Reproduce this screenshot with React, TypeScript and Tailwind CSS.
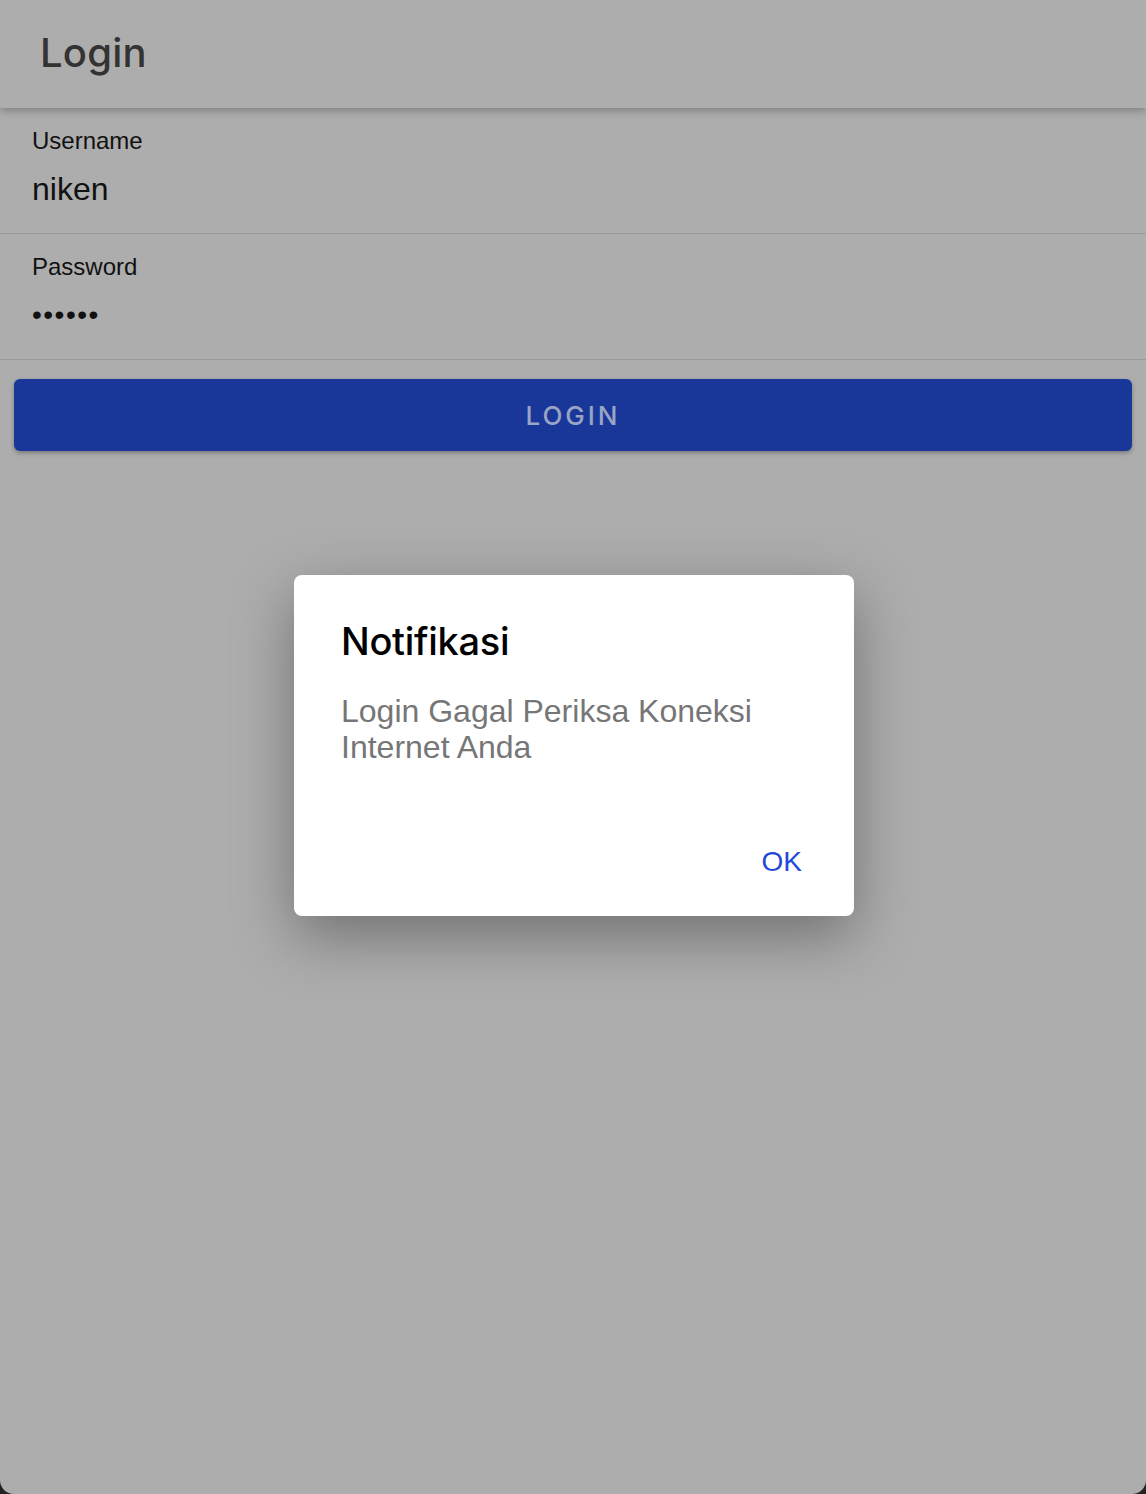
import React from "react";

// ─── Login screen with alert overlay ──────────────────────────────────────────

function Field({ label, value, secret }: { label: string; value: string; secret?: boolean }) {
  return (
    <div className="pl-8 border-b border-[#999999] h-[126px] flex flex-col">
      <span className="mt-[19px] text-[24px] leading-[28px] text-[#111111]">{label}</span>
      {secret ? (
        <span className="mt-[18px] text-[28px] leading-[32px] tracking-[1.5px] text-[#111111]">
          {value}
        </span>
      ) : (
        <span className="mt-[16px] text-[32px] leading-[36px] text-[#111111]">{value}</span>
      )}
    </div>
  );
}

export default function App() {
  return (
    <div className="w-[1146px] h-[1494px] bg-[#222222] relative overflow-hidden font-['Liberation_Sans',Arial,sans-serif]">
      <div className="h-full bg-[#adadad] rounded-b-[14px] flex flex-col">
        {/* Header */}
        <div className="h-[108px] shrink-0 flex items-center pl-10 shadow-[0_3px_8px_rgba(0,0,0,0.25)] relative z-10">
          <h1 className="text-[40px] leading-none text-[#333333] font-['Inter',sans-serif] font-medium tracking-[0.2px] pb-[2px]">
            Login
          </h1>
        </div>

        {/* Form */}
        <div className="flex flex-col">
          <Field label="Username" value="niken" />
          <Field label="Password" value="••••••" secret />
          <div className="px-[14px] pt-[19px]">
            <button className="w-full h-[72px] rounded-[6px] bg-[#183799] shadow-[0_2px_4px_rgba(0,0,0,0.3)] text-[26px] tracking-[3px] text-[#9aa4c4] font-['Inter',sans-serif] font-medium">
              LOGIN
            </button>
          </div>
        </div>
      </div>

      {/* Alert */}
      <div className="absolute inset-0 flex items-center justify-center pl-[2px] pb-[4px]">
        <div className="w-[560px] h-[341px] bg-white rounded-[8px] shadow-[0_20px_60px_rgba(0,0,0,0.35)] flex flex-col px-[47px]">
          <h2 className="mt-[43px] text-[38px] leading-[46px] font-['Inter',sans-serif] font-medium text-black tracking-[-0.3px]">
            Notifikasi
          </h2>
          <p className="mt-[29px] text-[32px] leading-[36px] text-[#767676]">
            Login Gagal Periksa Koneksi Internet Anda
          </p>
          <div className="mt-auto mb-[38px] flex justify-end pr-[5px]">
            <button className="text-[28px] leading-[32px] text-[#2348d9]">OK</button>
          </div>
        </div>
      </div>
    </div>
  );
}
